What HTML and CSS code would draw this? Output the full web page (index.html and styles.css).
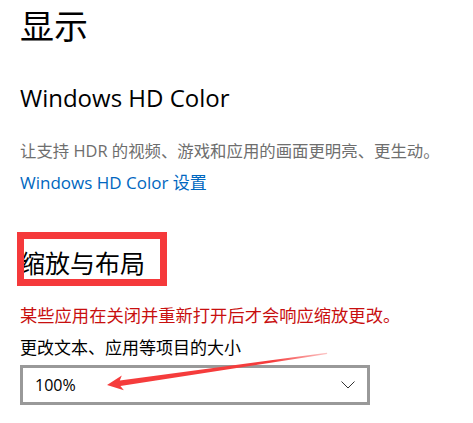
FILE: index.html
```html
<!DOCTYPE html>
<html lang="zh-CN">
<head>
<meta charset="utf-8">
<link rel="stylesheet" href="styles.css">
</head>
<body>
<div class="page">
  <h1 class="title">显示</h1>
  <h2 class="section">Windows HD Color</h2>
  <p class="desc">让支持 HDR 的视频、游戏和应用的画面更明亮、更生动。</p>
  <a class="link" href="#">Windows HD Color 设置</a>
  <div class="heading-wrap">
    <h2 class="section cjk">缩放与布局</h2>
    <div class="mark-box"></div>
  </div>
  <p class="warn">某些应用在关闭并重新打开后才会响应缩放更改。</p>
  <p class="label">更改文本、应用等项目的大小</p>
  <div class="select">
    <span class="select-value">100%</span>
    <svg class="chevron" width="14" height="8" viewBox="0 0 14 8"><path d="M0.5 0.5 L7 7 L13.5 0.5" fill="none" stroke="#333" stroke-width="1"/></svg>
  </div>
  <svg class="arrow" width="473" height="423" viewBox="0 0 473 423">
    <defs>
      <linearGradient id="fade" x1="327" y1="354" x2="107" y2="385" gradientUnits="userSpaceOnUse">
        <stop offset="0" stop-color="#f53c3c" stop-opacity="0.3"/>
        <stop offset="0.25" stop-color="#f53c3c" stop-opacity="1"/>
        <stop offset="1" stop-color="#f53c3c"/>
      </linearGradient>
    </defs>
    <polygon fill="url(#fade)" points="107,385 121.8,375.4 119.8,380.6 327,352.8 327.2,354 120.4,385.9 123.9,390.3"/>
  </svg>
</div>
</body>
</html>
```
FILE: styles.css
```css
html, body {
  margin: 0;
  padding: 0;
  background: #ffffff;
}
.page {
  position: relative;
  width: 473px;
  height: 423px;
  overflow: hidden;
  padding-left: 20px;
  box-sizing: border-box;
  font-family: "Open Sans", "Noto Sans CJK SC", sans-serif;
  color: #000;
}
.title {
  margin: 0;
  font-family: "Noto Sans CJK SC", sans-serif;
  font-weight: 400;
  font-size: 34px;
  line-height: 50px;
}
.section {
  margin: 32px 0 0;
  font-weight: 400;
  font-size: 24px;
  line-height: 32px;
}
.desc {
  margin: 25px 0 0;
  font-size: 16.4px;
  line-height: 24px;
  color: #6e6e6e;
  white-space: nowrap;
}
.link {
  display: block;
  margin-top: 8px;
  font-size: 17px;
  line-height: 24px;
  color: #0067c0;
  text-decoration: none;
}
.heading-wrap {
  position: relative;
  margin-top: 50px;
}
.heading-wrap .section {
  margin: 0;
  font-family: "Noto Sans CJK SC", sans-serif;
  font-size: 25px;
  line-height: 34px;
}
.mark-box {
  position: absolute;
  left: -3px;
  top: -13px;
  width: 150px;
  height: 54px;
  border: 7px solid #f5393b;
  box-sizing: border-box;
}
.warn {
  margin: 24px 0 0;
  font-family: "Noto Sans CJK SC", sans-serif;
  font-size: 17.3px;
  line-height: 24px;
  color: #c80f0f;
  white-space: nowrap;
}
.label {
  margin: 8px 0 0;
  font-family: "Noto Sans CJK SC", sans-serif;
  font-size: 17px;
  line-height: 24px;
  color: #000;
}
.select {
  margin-top: 6px;
  width: 350px;
  height: 40px;
  box-sizing: border-box;
  border: 3px solid #999999;
  display: flex;
  align-items: center;
  justify-content: space-between;
  padding: 0 12px 0 12px;
}
.select-value {
  font-size: 16px;
}
.chevron {
  display: block;
}
.arrow {
  position: absolute;
  left: 0;
  top: 0;
  pointer-events: none;
}
```
